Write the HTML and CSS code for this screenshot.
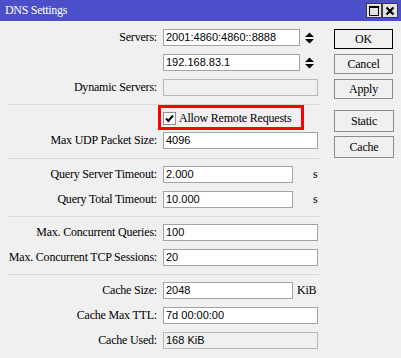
FILE: index.html
```html
<!DOCTYPE html>
<html lang="en">
<head>
  <meta charset="UTF-8" />
  <title>DNS Settings</title>
  <link rel="stylesheet" href="styles.css">
</head>
<body>
  <div class="titlebar">
    <span class="title">DNS Settings</span>
    <div class="ctrls">
      <span class="ctrl">
        <svg width="10" height="10" viewBox="0 0 10 10"><rect x="0.5" y="0.5" width="9" height="9" fill="none" stroke="#000" stroke-width="1"/><rect x="0" y="0" width="10" height="2" fill="#000"/></svg>
      </span>
      <span class="ctrl">
        <svg width="10" height="10" viewBox="0 0 10 10"><path d="M1.5 1.5 L8.5 8.5 M8.5 1.5 L1.5 8.5" stroke="#000" stroke-width="2.2"/></svg>
      </span>
    </div>
  </div>

  <div class="content">
    <div class="form">
      <!-- servers -->
      <div class="group">
        <div class="row">
          <span class="label">Servers:</span>
          <span class="field mid">2001:4860:4860::8888</span>
          <svg class="spin" width="9" height="12" viewBox="0 0 9 12"><path d="M0 5 L4.5 0.5 L9 5 Z M0 7 L9 7 L4.5 11.5 Z" fill="#000"/></svg>
        </div>
        <div class="row">
          <span class="label"></span>
          <span class="field mid">192.168.83.1</span>
          <svg class="spin" width="9" height="12" viewBox="0 0 9 12"><path d="M0 5 L4.5 0.5 L9 5 Z M0 7 L9 7 L4.5 11.5 Z" fill="#000"/></svg>
        </div>
        <div class="row">
          <span class="label">Dynamic Servers:</span>
          <span class="field off"></span>
        </div>
      </div>
      <div class="sep"></div>

      <!-- remote requests / udp -->
      <div class="group">
        <div class="row check-row">
          <span class="label"></span>
          <span class="checkbox">
            <svg width="11" height="11" viewBox="0 0 11 11"><path d="M2 5.5 L4.3 8 L9 2.5" fill="none" stroke="#000" stroke-width="2"/></svg>
          </span>
          <span class="check-text">Allow Remote Requests</span>
          <span class="highlight"></span>
        </div>
        <div class="row">
          <span class="label">Max UDP Packet Size:</span>
          <span class="field">4096</span>
        </div>
      </div>
      <div class="sep wide"></div>

      <!-- timeouts -->
      <div class="group">
        <div class="row">
          <span class="label">Query Server Timeout:</span>
          <span class="field short">2.000</span>
          <span class="unit-s">s</span>
        </div>
        <div class="row">
          <span class="label">Query Total Timeout:</span>
          <span class="field short">10.000</span>
          <span class="unit-s">s</span>
        </div>
      </div>
      <div class="sep"></div>

      <!-- concurrency -->
      <div class="group">
        <div class="row">
          <span class="label">Max. Concurrent Queries:</span>
          <span class="field">100</span>
        </div>
        <div class="row">
          <span class="label">Max. Concurrent TCP Sessions:</span>
          <span class="field">20</span>
        </div>
      </div>
      <div class="sep"></div>

      <!-- cache -->
      <div class="group">
        <div class="row">
          <span class="label">Cache Size:</span>
          <span class="field short">2048</span>
          <span class="unit">KiB</span>
        </div>
        <div class="row">
          <span class="label">Cache Max TTL:</span>
          <span class="field">7d 00:00:00</span>
        </div>
        <div class="row">
          <span class="label">Cache Used:</span>
          <span class="field off">168 KiB</span>
        </div>
      </div>
    </div>

    <div class="buttons">
      <div class="btn default">OK</div>
      <div class="btn">Cancel</div>
      <div class="btn">Apply</div>
      <div class="btn tall first-tall">Static</div>
      <div class="btn tall">Cache</div>
    </div>
  </div>
</body>
</html>
```

FILE: styles.css
```css
*, *::before, *::after {
  box-sizing: border-box;
}
body {
  margin: 0;
  width: 401px;
  height: 358px;
  overflow: hidden;
  background: #f0f0f0;
  color: #000;
  font-family: "Liberation Serif", serif;
  font-size: 12px;
  letter-spacing: -0.2px;
}

.titlebar {
  height: 21px;
  background: #4b4fc9;
  color: #fff;
  display: flex;
  align-items: center;
  justify-content: space-between;
  padding: 0 3px 0 5px;
}
.title {
  font-size: 12px;
  letter-spacing: -0.3px;
}
.ctrls {
  display: flex;
  gap: 0;
}
.ctrl {
  width: 16px;
  height: 15px;
  background: #e2e2e2;
  border: 1px solid #3c3c3c;
  display: flex;
  align-items: center;
  justify-content: center;
}

.content {
  display: flex;
}
.form {
  width: 320px;
  padding-top: 8px;
}
.group {
  display: flex;
  flex-direction: column;
  gap: 8px;
}
.sep {
  height: 1px;
  width: 311px;
  margin: 8px 0 7px 8px;
  background: #d9d9d9;
}
.sep.wide {
  margin-top: 9px;
}
.row {
  display: flex;
  align-items: center;
  height: 17px;
}
.label {
  width: 157px;
  margin-right: 6px;
  text-align: right;
  white-space: nowrap;
}
.field {
  width: 155px;
  height: 17px;
  background: #fff;
  border: 1px solid #a3a3a3;
  padding-left: 2px;
  font-family: "Liberation Sans", sans-serif;
  font-size: 11px;
  letter-spacing: 0;
  line-height: 15px;
  white-space: nowrap;
}
.field.mid {
  width: 137px;
}
.field.short {
  width: 130px;
}
.field.off {
  background: #f0f0f0;
  border-color: #b9b9b9;
}
.spin {
  margin-left: 5px;
}
.unit-s {
  margin-left: 20px;
}
.unit {
  margin-left: 4px;
}

.check-row {
  position: relative;
  height: 13px;
  margin-bottom: -1px;
}
.checkbox {
  width: 13px;
  height: 13px;
  background: #fff;
  border: 1px solid #8f8f8f;
  display: flex;
  align-items: center;
  justify-content: center;
}
.check-text {
  margin-left: 3px;
}
.highlight {
  position: absolute;
  left: 158px;
  top: -7px;
  width: 146px;
  height: 25px;
  border: 3px solid #ff0000;
}

.buttons {
  padding: 8px 0 0 14px;
  display: flex;
  flex-direction: column;
  gap: 5px;
}
.btn {
  width: 59px;
  height: 20px;
  border: 1px solid #8c8c8c;
  background: #f0f0f0;
  text-align: center;
  line-height: 18px;
}
.btn.default {
  border-color: #000;
}
.btn.tall {
  width: 60px;
  height: 22px;
  line-height: 20px;
  margin-top: -1px;
}
.btn.first-tall {
  margin-top: 6px;
}
```
